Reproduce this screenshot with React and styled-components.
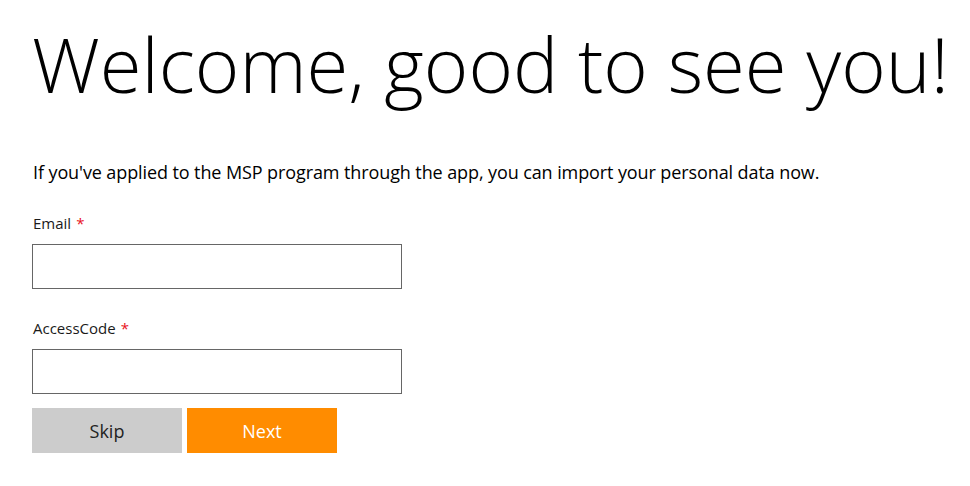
import React from "react";
import styled, { createGlobalStyle } from "styled-components";

const Global = createGlobalStyle`
  html, body { margin: 0; padding: 0; background: #fff; }
  body { font-family: "Open Sans", "Noto Sans", sans-serif; color: #000; }
`;

const Page = styled.div`
  padding: 12px 0 0 32px;
  display: flex;
  flex-direction: column;
`;

const Title = styled.h1`
  margin: 0;
  font-family: "Open Sans", sans-serif;
  font-weight: 300;
  font-size: 76px;
  line-height: 104px;
  letter-spacing: 0;
  white-space: nowrap;
`;

const Intro = styled.p`
  margin: 44px 0 0 1px;
  font-size: 18px;
  line-height: 24px;
  letter-spacing: -0.1px;
  white-space: nowrap;
`;

const Form = styled.form`
  display: flex;
  flex-direction: column;
  margin-top: 29px;
`;

const Field = styled.div`
  display: flex;
  flex-direction: column;
  margin-bottom: ${(p) => p.$mb}px;
`;

const Label = styled.label`
  font-size: 15px;
  line-height: 20px;
  color: #1a1a1a;
  margin: 0 0 11px 1px;
`;

const Req = styled.span`
  color: #e81123;
  margin-left: 5px;
`;

const Input = styled.input`
  box-sizing: border-box;
  width: 370px;
  height: 45px;
  border: 1px solid #666;
  border-radius: 0;
  padding: 0 8px;
  font: inherit;
  outline: none;
  background: #fff;
`;

const Buttons = styled.div`
  display: flex;
  gap: 5px;
`;

const Button = styled.button`
  width: 150px;
  height: 45px;
  padding: 0;
  border: none;
  border-radius: 0;
  font-family: "Open Sans", sans-serif;
  font-size: 18px;
  background: ${(p) => (p.$primary ? "#ff8c00" : "#cccccc")};
  color: ${(p) => (p.$primary ? "#fff" : "#222")};
  cursor: pointer;
`;

export default function App() {
  return (
    <>
      <Global />
      <Page>
        <Title>Welcome, good to see you!</Title>
        <Intro>
          If you've applied to the MSP program through the app, you can import your personal data now.
        </Intro>
        <Form onSubmit={(e) => e.preventDefault()}>
          <Field $mb={29}>
            <Label>
              Email<Req>*</Req>
            </Label>
            <Input type="email" />
          </Field>
          <Field $mb={14}>
            <Label>
              AccessCode<Req>*</Req>
            </Label>
            <Input type="text" />
          </Field>
          <Buttons>
            <Button type="button">Skip</Button>
            <Button type="button" $primary>
              Next
            </Button>
          </Buttons>
        </Form>
      </Page>
    </>
  );
}
